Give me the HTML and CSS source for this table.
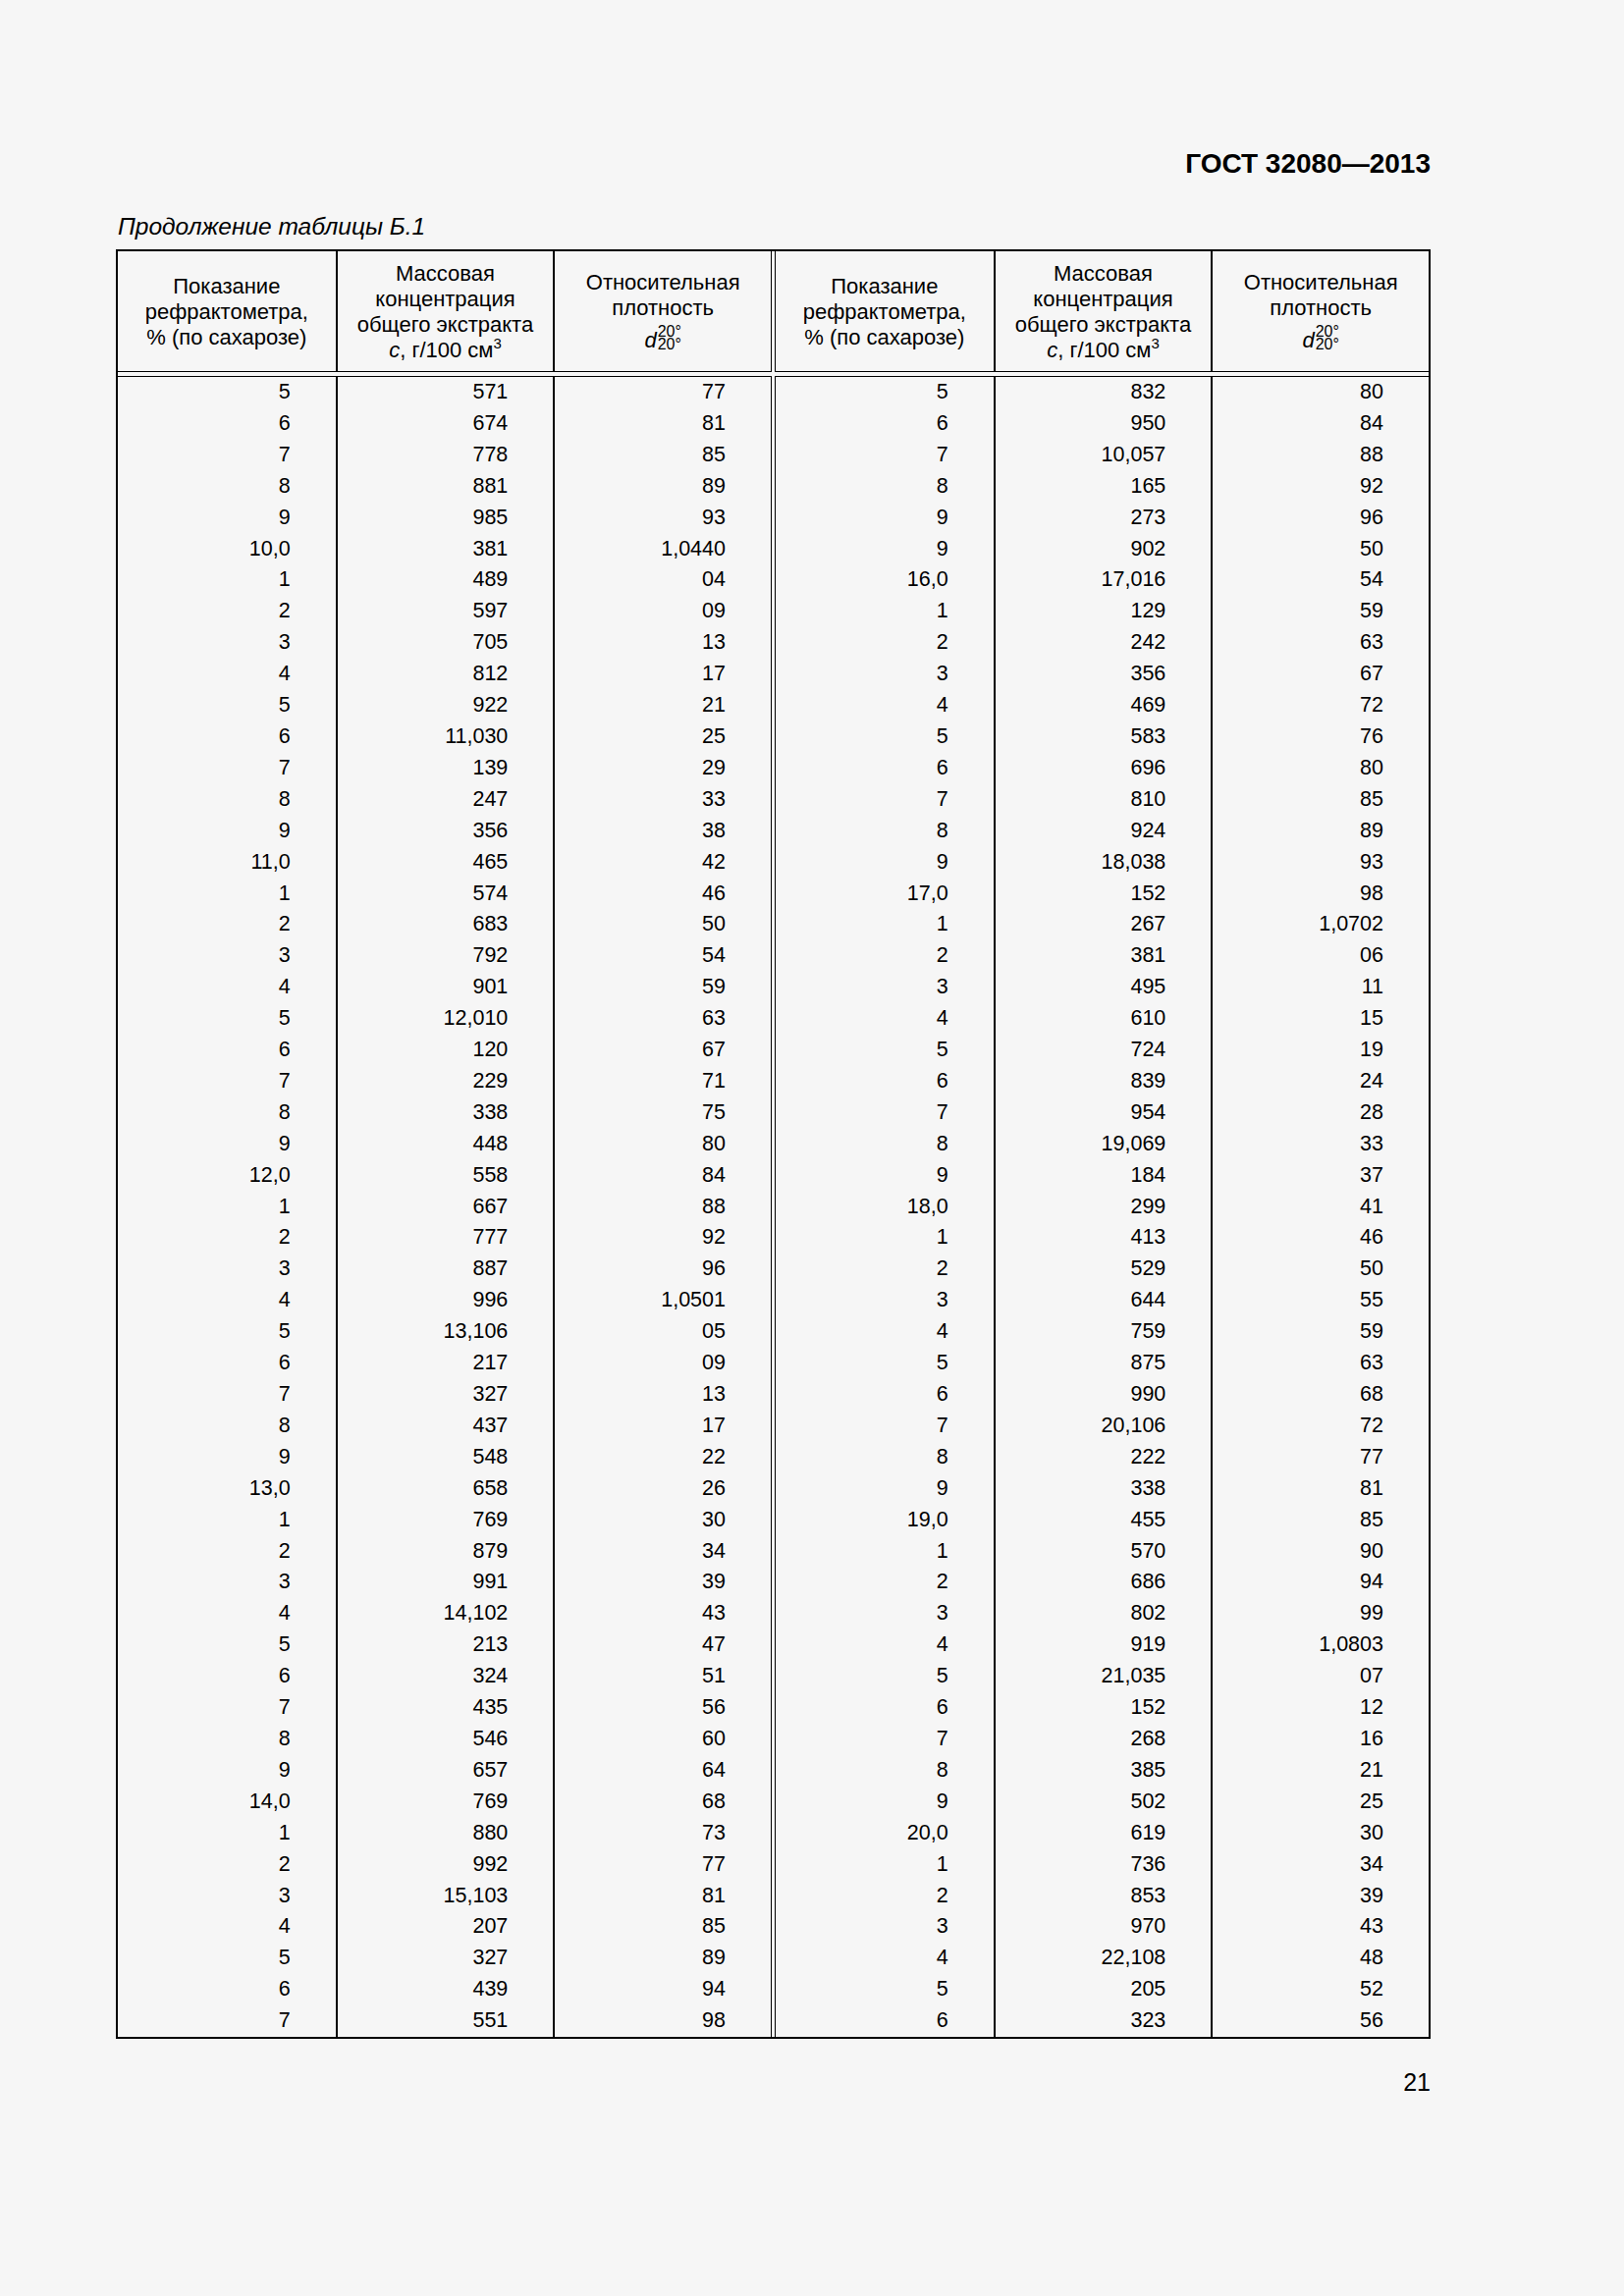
FILE: index.html
```html
<!DOCTYPE html>
<html lang="ru">
<head>
<meta charset="utf-8">
<title>ГОСТ 32080—2013</title>
<link rel="stylesheet" href="styles.css">
</head>
<body>
<div class="page">
  <div class="doc-id">ГОСТ 32080—2013</div>
  <div class="caption">Продолжение таблицы Б.1</div>
  <div class="table">
    <div class="head">
      <div class="hcell"><div class="htext">Показание<br>рефрактометра,<br>% (по сахарозе)</div></div>
      <div class="hcell"><div class="htext">Массовая<br>концентрация<br>общего экстракта<br><i>с</i>, г/100 см<sup>3</sup></div></div>
      <div class="hcell"><div class="htext">Относительная<br>плотность<br><span class="dens"><i>d</i><span class="idx"><span>20°</span><span>20°</span></span></span></div></div>
    </div>
    <div class="head">
      <div class="hcell"><div class="htext">Показание<br>рефрактометра,<br>% (по сахарозе)</div></div>
      <div class="hcell"><div class="htext">Массовая<br>концентрация<br>общего экстракта<br><i>с</i>, г/100 см<sup>3</sup></div></div>
      <div class="hcell"><div class="htext">Относительная<br>плотность<br><span class="dens"><i>d</i><span class="idx"><span>20°</span><span>20°</span></span></span></div></div>
    </div>
    <div class="body">
      <div class="col">5
6
7
8
9
10,0
1
2
3
4
5
6
7
8
9
11,0
1
2
3
4
5
6
7
8
9
12,0
1
2
3
4
5
6
7
8
9
13,0
1
2
3
4
5
6
7
8
9
14,0
1
2
3
4
5
6
7</div>
      <div class="col">571
674
778
881
985
381
489
597
705
812
922
11,030
139
247
356
465
574
683
792
901
12,010
120
229
338
448
558
667
777
887
996
13,106
217
327
437
548
658
769
879
991
14,102
213
324
435
546
657
769
880
992
15,103
207
327
439
551</div>
      <div class="col">77
81
85
89
93
1,0440
04
09
13
17
21
25
29
33
38
42
46
50
54
59
63
67
71
75
80
84
88
92
96
1,0501
05
09
13
17
22
26
30
34
39
43
47
51
56
60
64
68
73
77
81
85
89
94
98</div>
    </div>
    <div class="body">
      <div class="col">5
6
7
8
9
9
16,0
1
2
3
4
5
6
7
8
9
17,0
1
2
3
4
5
6
7
8
9
18,0
1
2
3
4
5
6
7
8
9
19,0
1
2
3
4
5
6
7
8
9
20,0
1
2
3
4
5
6</div>
      <div class="col">832
950
10,057
165
273
902
17,016
129
242
356
469
583
696
810
924
18,038
152
267
381
495
610
724
839
954
19,069
184
299
413
529
644
759
875
990
20,106
222
338
455
570
686
802
919
21,035
152
268
385
502
619
736
853
970
22,108
205
323</div>
      <div class="col">80
84
88
92
96
50
54
59
63
67
72
76
80
85
89
93
98
1,0702
06
11
15
19
24
28
33
37
41
46
50
55
59
63
68
72
77
81
85
90
94
99
1,0803
07
12
16
21
25
30
34
39
43
48
52
56</div>
    </div>
  </div>
  <div class="page-num">21</div>
</div>
</body>
</html>
```

FILE: styles.css
```css
html, body {
  margin: 0;
  padding: 0;
  background: #f6f6f6;
}

body {
  font-family: "Liberation Sans", Arial, sans-serif;
  color: #000;
}

.page {
  width: 1654px;
  min-height: 2339px;
  box-sizing: border-box;
  padding: 153px 197px 0 118px;
}

.doc-id {
  font-weight: bold;
  font-size: 28px;
  line-height: 28px;
  text-align: right;
}

.caption {
  margin-top: 38px;
  font-style: italic;
  font-size: 24.5px;
  line-height: 24px;
  padding-left: 2px;
}

.table {
  margin-top: 11px;
  border: 2px solid #000;
  display: grid;
  grid-template-columns: 1fr 1fr;
  grid-template-rows: 123px auto;
  column-gap: 3px;
  row-gap: 4px;
}

.head,
.body {
  display: grid;
  grid-template-columns: 1fr 1fr 1fr;
}

.head:nth-child(1),
.body:nth-child(3) {
  border-right: 1px solid #000;
}

.head:nth-child(2),
.body:nth-child(4) {
  border-left: 1px solid #000;
}

.head {
  border-bottom: 1px solid #000;
}

.body {
  border-top: 1px solid #000;
}

.hcell {
  display: flex;
  align-items: center;
  justify-content: center;
  text-align: center;
  font-size: 22px;
  line-height: 26px;
}

.htext {
  padding-top: 2px;
}

.hcell + .hcell,
.col + .col {
  border-left: 2px solid #000;
}

.hcell sup {
  font-size: 15px;
  line-height: 0;
  vertical-align: 9px;
}

.dens {
  display: inline-flex;
  align-items: center;
  height: 34px;
  vertical-align: middle;
}

.dens i {
  font-size: 22px;
  padding-top: 6px;
}

.idx {
  display: inline-flex;
  flex-direction: column;
  font-size: 16px;
  line-height: 13.5px;
  margin-left: 1px;
  text-align: left;
}

.col {
  white-space: pre-line;
  text-align: right;
  font-size: 21.5px;
  line-height: 31.9px;
  padding: 0 46px 0 0;
}

.page-num {
  margin-top: 32px;
  text-align: right;
  font-size: 25px;
  line-height: 25px;
}
```
